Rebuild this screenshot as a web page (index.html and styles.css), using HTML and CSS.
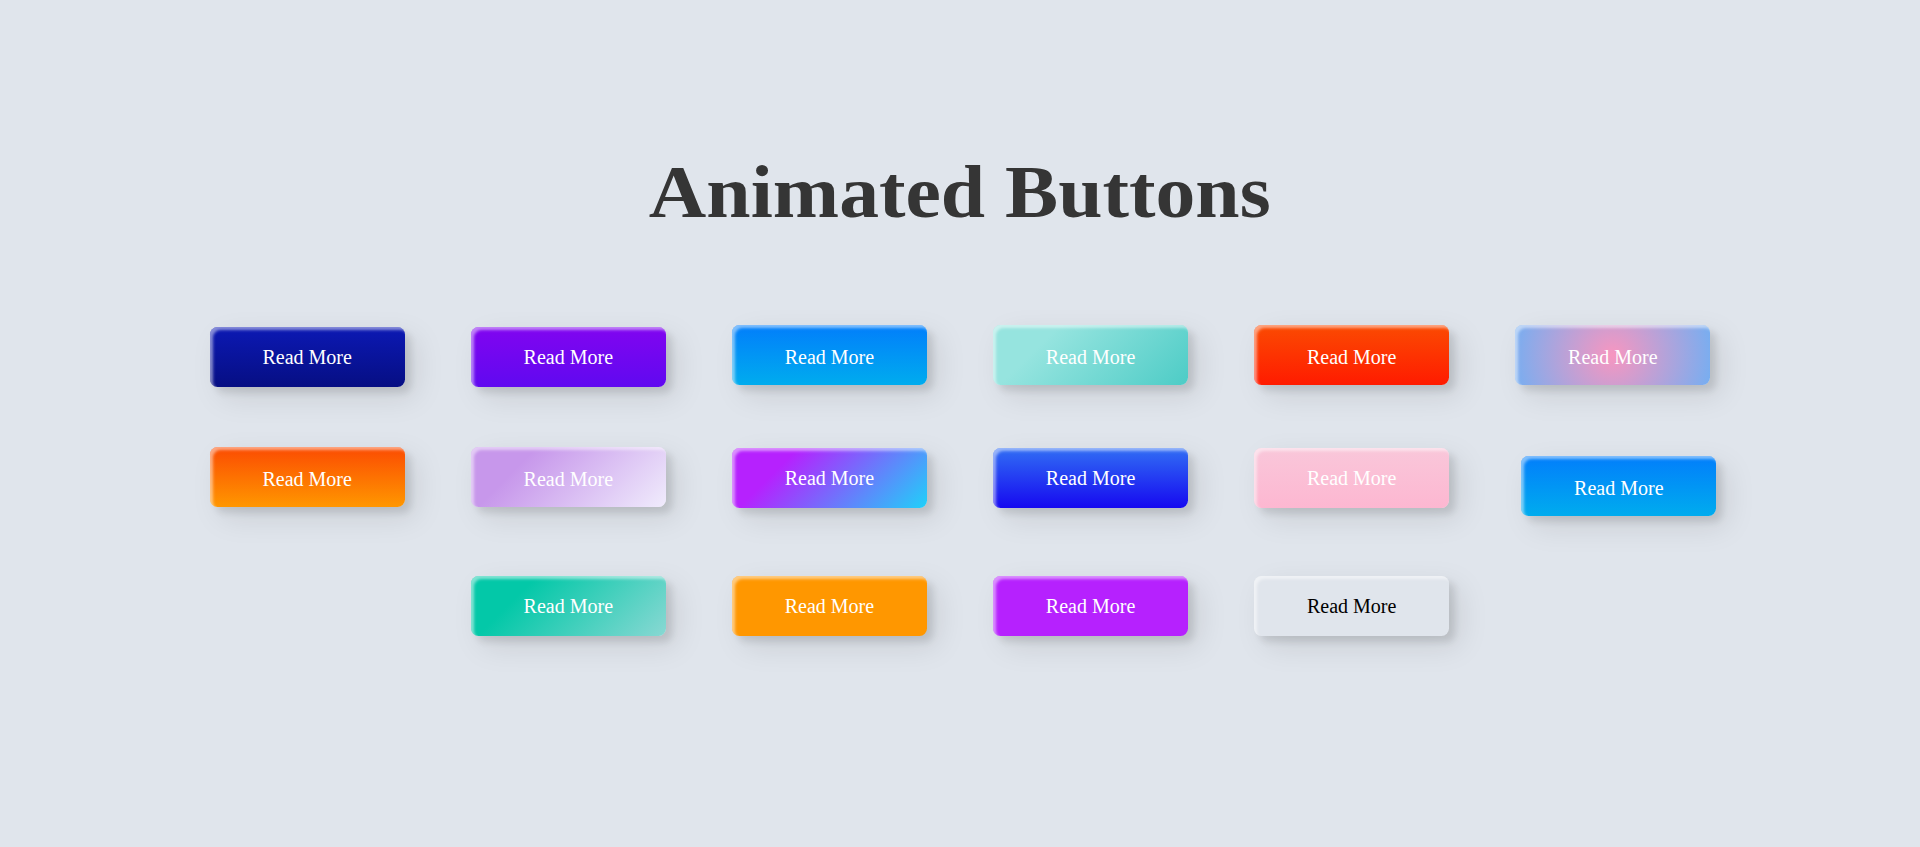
FILE: index.html
```html
<!DOCTYPE html>
<html lang="en">
<head>
<meta charset="utf-8">
<title>Animated Buttons</title>
<link rel="stylesheet" href="styles.css">
</head>
<body>
<main class="page">
  <h1 class="title"><span class="title-text">Animated Buttons</span></h1>
  <div class="frame">
    <button class="btn btn-1">Read More</button>
    <button class="btn btn-2">Read More</button>
    <button class="btn lh btn-3">Read More</button>
    <button class="btn lh btn-4">Read More</button>
    <button class="btn lh btn-5">Read More</button>
    <button class="btn lh btn-6">Read More</button>
    <button class="btn lh btn-7">Read More</button>
    <button class="btn lh btn-8">Read More</button>
    <button class="btn btn-9">Read More</button>
    <button class="btn btn-10">Read More</button>
    <button class="btn btn-11">Read More</button>
    <button class="btn lh btn-12">Read More</button>
    <button class="btn btn-13">Read More</button>
    <button class="btn btn-14">Read More</button>
    <button class="btn btn-15">Read More</button>
    <button class="btn btn-16">Read More</button>
  </div>
</main>
</body>
</html>
```

FILE: styles.css
```css
html, body {
  margin: 0;
  padding: 0;
}

body {
  background: #e0e5ec;
  min-height: 847px;
  font-family: "Liberation Serif", "Times New Roman", serif;
}

.page {
  padding-top: 150px;
}

.title {
  margin: 0;
  text-align: center;
  font-size: 75px;
  line-height: 83px;
  font-weight: 700;
  color: #353535;
}

.title-text {
  display: inline-block;
  transform: scaleX(1.062);
}

.frame {
  width: 1560px;
  margin: 92px auto 0;
  display: flex;
  flex-wrap: wrap;
  justify-content: center;
  align-items: flex-start;
  column-gap: 66.14px;
  row-gap: 60px;
}

.btn {
  box-sizing: border-box;
  width: 195px;
  height: 60px;
  padding: 0;
  border: none;
  border-radius: 7.5px;
  font-family: "Liberation Serif", "Times New Roman", serif;
  font-size: 20px;
  line-height: 60px;
  color: #fff;
  background: transparent;
  cursor: pointer;
  box-shadow: inset 3px 3px 3px 0 rgba(255, 255, 255, 0.5),
    10.5px 10.5px 30px 0 rgba(0, 0, 0, 0.1),
    6px 6px 7.5px 0 rgba(0, 0, 0, 0.1);
  outline: none;
}

.btn.lh {
  padding-top: 4px;
  line-height: 56px;
}

.btn-1 {
  margin-top: 2px;
  background: linear-gradient(0deg, #060e83 0%, #0c19b4 100%);
}

.btn-2 {
  margin-top: 2px;
  background: linear-gradient(0deg, #6009f0 0%, #8105f0 100%);
}

.btn-3 {
  background: linear-gradient(0deg, #00acee 0%, #027efb 100%);
}

.btn-4 {
  background: linear-gradient(315deg, #4dccc6 0%, #96e4df 74%);
}

.btn-5 {
  background: linear-gradient(0deg, #ff1b00 0%, #fb4b02 100%);
}

.btn-6 {
  background: radial-gradient(circle, #f796c0 0%, #76aef1 100%);
}

.btn-7 {
  background: linear-gradient(0deg, #ff9700 0%, #fb4b02 100%);
}

.btn-8 {
  background: linear-gradient(315deg, #f0ecfc 0%, #c797eb 74%);
}

.btn-9 {
  margin-top: 1px;
  background: linear-gradient(315deg, #1fd1f9 0%, #b621fe 74%);
}

.btn-10 {
  margin-top: 1px;
  background: linear-gradient(0deg, #1609f0 0%, #316ef4 100%);
}

.btn-11 {
  margin-top: 1px;
  background: linear-gradient(0deg, #fdb7d1 0%, #f9c7da 100%);
}

.btn-12 {
  margin-top: 9px;
  margin-left: 6px;
  margin-right: -6px;
  background: linear-gradient(0deg, #00acee 0%, #027efb 100%);
}

.btn-13 {
  background: linear-gradient(315deg, #89d8d3 0%, #03c8a8 74%);
}

.btn-14 {
  background: #ff9700;
}

.btn-15 {
  background: #b621fe;
}

.btn-16 {
  color: #000;
}
```
